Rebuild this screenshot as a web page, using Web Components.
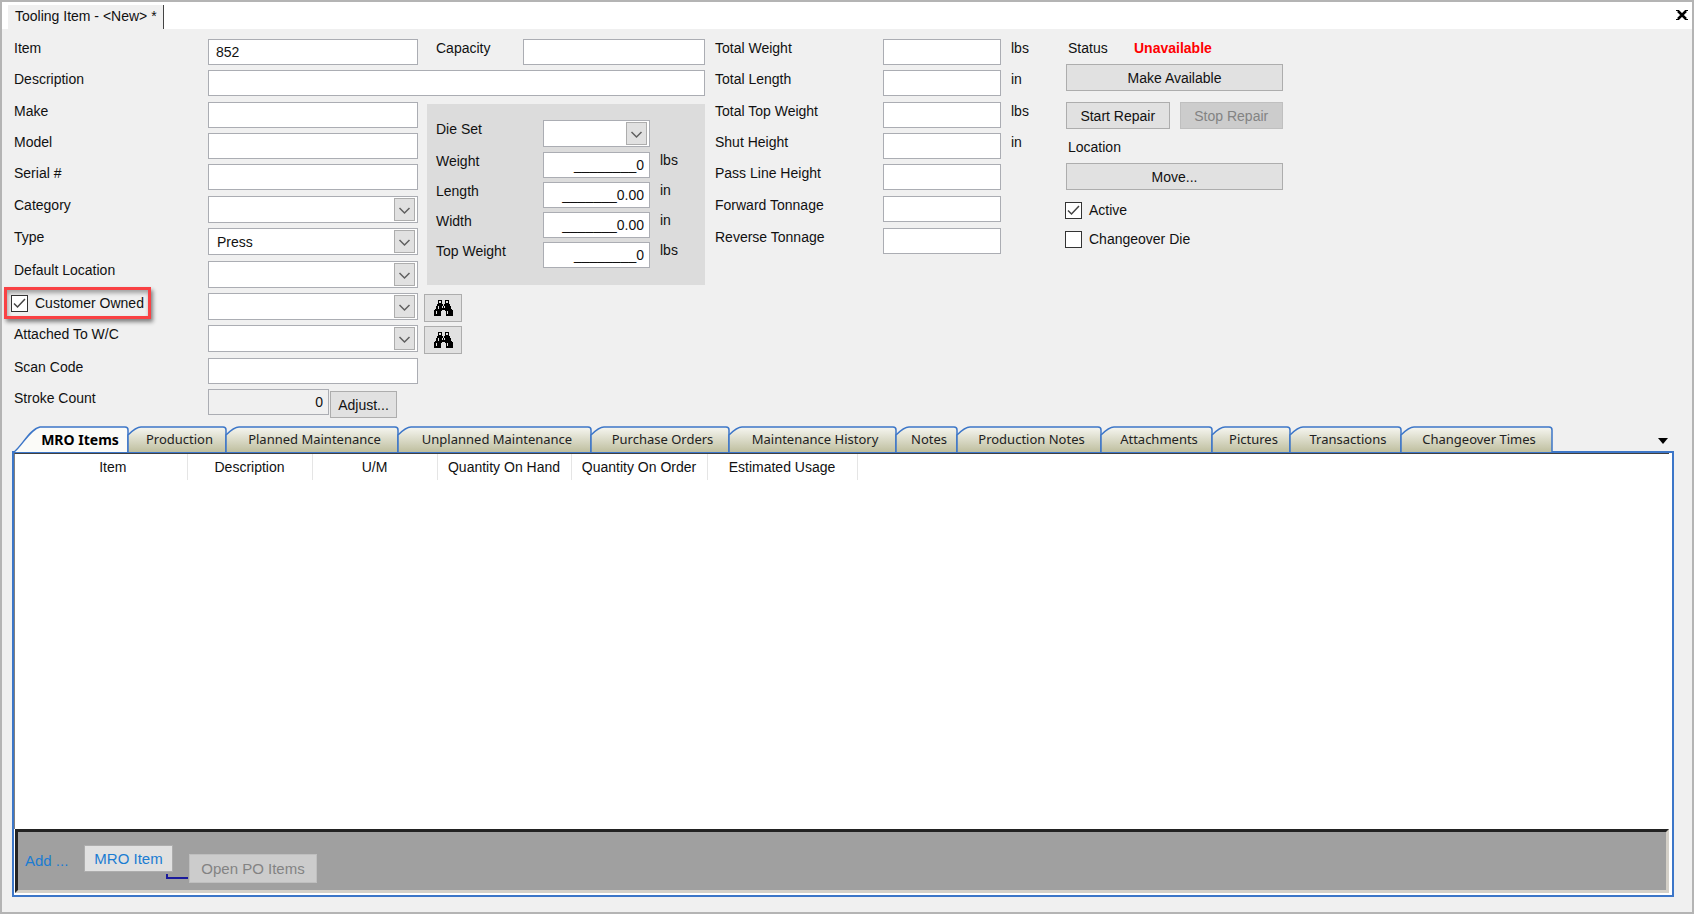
<!DOCTYPE html>
<html lang="en">
<head>
<meta charset="utf-8">
<title>Tooling Item</title>
<style>
  html, body { margin: 0; height: 100%; }
  body {
    font: 14px/18px "Liberation Sans", Arial, sans-serif;
    color: #111;
    background: #f0f0f0;
    --line: #abadb3;
    --button: #e1e1e1;
    --blue: #3c76c8;
  }
</style>
</head>
<body>
<tooling-window></tooling-window>

<script>
const define = (name, html, setup) => {
  const template = document.createElement('template');
  template.innerHTML = html;
  customElements.define(name, class extends HTMLElement {
    constructor() {
      super();
      this.attachShadow({ mode: 'open' }).append(template.content.cloneNode(true));
    }
    connectedCallback() {
      if (setup && !this.ready) { this.ready = true; setup(this, this.shadowRoot); }
    }
  });
};

/* Caption, one-line text box, optional unit */
define('text-field', `
<style>
  :host { display: flex; align-items: flex-start; min-width: 0; }
  label { flex: none; width: var(--caption, 194px); line-height: 18px; white-space: nowrap; }
  input {
    box-sizing: border-box; flex: 1; min-width: 0; height: 26px; margin: 0; padding: 0 5px 0 7px;
    border: 1px solid var(--line); border-radius: 0; background: #fff; font: inherit; color: inherit; outline: 0;
  }
  input:read-only { background: #f0f0f0; }
  :host([numeric]) input { text-align: right; }
  .unit { flex: none; width: var(--unit, 0px); padding-left: 10px; box-sizing: border-box; line-height: var(--unit-line, 18px); }
  .unit:empty { padding: 0; }
  ::slotted(*) { margin: 2px 0 0 1px; }
</style>
<label for="f"></label><input id="f" type="text"><span class="unit"></span><slot></slot>`,
(el, root) => {
  root.querySelector('label').textContent = el.getAttribute('caption');
  const input = root.querySelector('input');
  input.value = el.getAttribute('value') || '';
  input.readOnly = el.hasAttribute('locked');
  root.querySelector('.unit').textContent = el.getAttribute('unit') || '';
});

/* Caption and drop-down; the caption slot can hold another control instead */
define('combo-field', `
<style>
  :host { display: flex; align-items: flex-start; min-width: 0; }
  .caption { flex: none; width: var(--caption, 194px); line-height: 18px; white-space: nowrap; }
  .box { position: relative; flex: 1; min-width: 0; height: 27px; }
  select {
    box-sizing: border-box; width: 100%; height: 27px; margin: 0; padding: 0 26px 0 8px; appearance: none;
    border: 1px solid var(--line); border-radius: 0; background: #fff; font: inherit; color: inherit;
  }
  svg { position: absolute; right: 3px; top: 2px; pointer-events: none; }
  .unit { flex: none; width: var(--unit, 0px); }
</style>
<div class="caption"><slot><label for="f"></label></slot></div>
<div class="box">
  <select id="f"><option></option></select>
  <svg width="21" height="23" viewBox="0 0 21 23">
    <rect x=".5" y=".5" width="20" height="22" fill="#e1e1e1" stroke="#adadad"/>
    <path d="M5.500 10l5 5 5-5" fill="none" stroke="#606060" stroke-width="1.500"/>
  </svg>
</div><span class="unit"></span>`,
(el, root) => {
  root.querySelector('label').textContent = el.getAttribute('caption');
  root.querySelector('select').setAttribute('aria-label', el.getAttribute('caption'));
  root.querySelector('option').textContent = el.getAttribute('value') || '';
});

define('check-field', `
<style>
  :host { position: relative; display: flex; width: max-content; }
  label { display: flex; align-items: center; gap: 7px; line-height: 18px; white-space: nowrap; }
  input {
    appearance: none; flex: none; box-sizing: border-box; width: 17px; height: 17px; margin: 0;
    border: 1px solid #333; background: #fff;
  }
  .tick { position: relative; display: flex; }
  svg { position: absolute; left: 0; top: 0; pointer-events: none; visibility: hidden; }
  input:checked + svg { visibility: visible; }
  :host([marked])::before {
    content: ""; position: absolute; inset: -7px;
    border: 3px solid #f94144; box-shadow: 2px 3px 4px #0007, inset 1px 3px 4px #0005; pointer-events: none;
  }
</style>
<label><span class="tick"><input type="checkbox"><svg width="17" height="17" viewBox="0 0 17 17">
  <path d="M3 8.500l3.500 3.500 7.500-8" fill="none" stroke="#444" stroke-width="1.500"/></svg></span><slot></slot></label>`,
(el, root) => { root.querySelector('input').checked = el.hasAttribute('checked'); });

define('push-button', `
<style>
  :host { display: block; height: 27px; }
  button {
    box-sizing: border-box; display: flex; align-items: center; justify-content: center;
    width: 100%; height: 100%; margin: 0; padding: 0 8px; border: 1px solid #adadad; border-radius: 0;
    background: var(--button); font: inherit; color: inherit; white-space: nowrap;
  }
  button:disabled { background: #ccc; border-color: #bfbfbf; color: #838383; }
</style>
<button type="button"><slot></slot></button>`,
(el, root) => {
  const button = root.querySelector('button');
  button.disabled = el.hasAttribute('disabled');
  if (el.hasAttribute('hint')) button.setAttribute('aria-label', el.getAttribute('hint'));
});

define('find-icon', `
<style>:host { display: block; } svg { display: block; }</style>
<svg width="19" height="17" viewBox="0 0 19 17">
  <path fill="#000" d="M4 0h4v4h1v2h1V4h1V0h4v4h1v2h1v3h1v1h1v6h-7v-5h-1v-1H8v1H7v5H0v-6h1V9h1V6h1V4h1z"/>
  <path fill="#e1e1e1" d="M5 1h2v2H5zM12 1h2v2h-2zM4 6h1v3H4zM2 11h1v3H2zM8 6h1v2H8zM10 6h1v2h-1zM13 11h1v3h-1z"/>
</svg>`);

/* Document tab and close button above the form */
define('title-strip', `
<style>
  :host { display: flex; justify-content: space-between; align-items: flex-end; height: 27px; padding-left: 6px; background: #fff; }
  .tab { box-sizing: border-box; height: 24px; padding: 0 6px 0 7px; line-height: 22px; background: #f0f0f0; border-right: 1px solid #444; white-space: pre; }
  button { width: 14px; height: 12px; margin: 0 3px 8px 0; padding: 0; border: 0; background: none; }
  svg { display: block; }
</style>
<div class="tab"><slot></slot></div>
<button type="button" aria-label="Close"><svg width="14" height="12" viewBox="0 0 14 12">
  <path d="M3 2l8 8M11 2l-8 8" stroke="#000" stroke-width="2.500"/><path d="M1 1.500h3M10 1.500h3M1 10.500h3M10 10.500h3" stroke="#000"/></svg></button>`);

define('item-form', `
<style>
  :host { display: flex; align-items: flex-start; padding: 10px 0 8px 12px; }
  .main {
    display: grid; width: 691px; grid-template-columns: 404px 1fr;
    grid-template-rows: 31px 32px 31px 31px 32px 32px 33px 32px 32px 33px 31px 29px;
  }
  .main > * { grid-column: 1; }
  .main > .wide { grid-column: 1 / -1; }
  .main > .side { grid-column: 2; }
  .capacity { --caption: 87px; margin-left: 18px; }
  .die {
    --caption: 107px; --unit: 46px; --unit-line: 16px;
    grid-row: 3 / span 6; align-self: start; display: grid; gap: 4px;
    grid-template-rows: 28px; grid-auto-rows: 26px;
    box-sizing: border-box; height: 181px; margin: 2px 0 0 9px; padding: 16px 9px 0; background: #dcdcdc;
  }
  .owner { margin: 1px 0 0 -3px; }
  .find { width: 38px; height: 28px; margin: 1px 0 0 6px; }
  .adjust { width: 67px; }
  .stroke-row { display: flex; width: 383px; }
  .stroke-row text-field { flex: 1; }
  .totals { --caption: 168px; --unit: 46px; display: grid; grid-template-rows: 31px 32px 31px 31px 32px 32px 28px; width: 332px; margin-left: 10px; }
  .state { width: 217px; margin-left: 19px; }
  .line { display: flex; height: 25px; padding-left: 2px; }
  .line span { width: 66px; }
  strong { color: #f00; }
  .pair { display: grid; grid-template-columns: 1fr 1fr; gap: 10px; margin: 11px 0 9px; }
  .checks { display: grid; gap: 11px; margin: 11px 0 0 -1px; }
</style>
<div class="main">
  <text-field caption="Item" value="852"></text-field>
  <text-field class="side capacity" caption="Capacity"></text-field>
  <text-field class="wide" caption="Description"></text-field>
  <text-field caption="Make"></text-field>
  <div class="side die">
    <combo-field caption="Die Set"></combo-field>
    <text-field caption="Weight" value="________0" unit="lbs" numeric></text-field>
    <text-field caption="Length" value="_______0.00" unit="in" numeric></text-field>
    <text-field caption="Width" value="_______0.00" unit="in" numeric></text-field>
    <text-field caption="Top Weight" value="________0" unit="lbs" numeric></text-field>
  </div>
  <text-field caption="Model"></text-field>
  <text-field caption="Serial #"></text-field>
  <combo-field caption="Category"></combo-field>
  <combo-field caption="Type" value="Press"></combo-field>
  <combo-field caption="Default Location"></combo-field>
  <combo-field caption="Customer"><check-field class="owner" checked marked>Customer Owned</check-field></combo-field>
  <push-button class="side find" hint="Find customer"><find-icon></find-icon></push-button>
  <combo-field caption="Attached To W/C"></combo-field>
  <push-button class="side find" hint="Find work center"><find-icon></find-icon></push-button>
  <text-field caption="Scan Code"></text-field>
  <div class="stroke-row">
    <text-field caption="Stroke Count" value="0" numeric locked>
      <push-button class="adjust">Adjust...</push-button>
    </text-field>
  </div>
</div>
<div class="totals">
  <text-field caption="Total Weight" unit="lbs"></text-field>
  <text-field caption="Total Length" unit="in"></text-field>
  <text-field caption="Total Top Weight" unit="lbs"></text-field>
  <text-field caption="Shut Height" unit="in"></text-field>
  <text-field caption="Pass Line Height"></text-field>
  <text-field caption="Forward Tonnage"></text-field>
  <text-field caption="Reverse Tonnage"></text-field>
</div>
<div class="state">
  <div class="line"><span>Status</span><strong>Unavailable</strong></div>
  <push-button>Make Available</push-button>
  <div class="pair"><push-button>Start Repair</push-button><push-button disabled>Stop Repair</push-button></div>
  <div class="line">Location</div>
  <push-button>Move...</push-button>
  <div class="checks">
    <check-field checked>Active</check-field>
    <check-field>Changeover Die</check-field>
  </div>
</div>`);

/* A tab with a slanted left shoulder, drawn to the tab's own width */
define('page-tab', `
<style>
  :host { display: block; flex: none; height: 26px; font: 13px/27px "Noto Sans", "DejaVu Sans Condensed", sans-serif; }
  button {
    position: relative; display: block; width: 100%; height: 26px; margin: 0; padding: 0 0 0 5px;
    border: 0; background: none; font: inherit; color: #222; white-space: nowrap;
  }
  :host([selected]) button { font-weight: bold; font-size: 14px; padding-left: 18px; color: #000; }
  svg { position: absolute; left: 0; top: 0; overflow: visible; }
  span { position: relative; }
</style>
<button type="button" role="tab"><svg height="26"><defs><linearGradient id="g" x2="0" y2="1">
  <stop offset="0" stop-color="#f6f6f1"/><stop offset="1" stop-color="#bfbf9f"/></linearGradient></defs>
  <path stroke="#3c76c8" stroke-width="1.500"/></svg><span><slot></slot></span></button>`,
(el, root) => {
  const w = Number(el.getAttribute('size'));
  const selected = el.hasAttribute('selected');
  el.style.width = w + 'px';
  root.querySelector('svg').setAttribute('width', w);
  root.querySelector('button').setAttribute('aria-selected', selected);
  const path = root.querySelector('path');
  const end = `H${w - 3}Q${w} 1 ${w} 4V26`;
  path.setAttribute('d', selected ? `M0 26C8 20 16 3 26 1${end}` : `M0 26V9C4 5 8 1 13 1${end}`);
  path.setAttribute('fill', selected ? '#fbfbf8' : 'url(#g)');
});

define('items-pane', `
<style>
  :host { display: flex; flex-direction: column; flex: 1; margin: 0 18px 15px 10px; }
  nav { display: flex; height: 25px; padding-left: 2px; }
  .more { width: 20px; height: 20px; margin: 5px 1px 0 auto; padding: 0; border: 0; background: none; }
  .more svg { display: block; margin: auto; }
  .pane { display: flex; flex-direction: column; flex: 1; border: 2px solid var(--blue); background: #fff; }
  .sheet { flex: 1; border-top: 1px solid #404040; border-left: 1px solid #808080; margin-right: 3px; }
  table { border-collapse: collapse; table-layout: fixed; width: 842px; }
  th { height: 26px; box-sizing: border-box; padding: 0; border-right: 1px solid #e5e5e5; font-weight: normal; text-align: center; white-space: nowrap; }
  th.mark { border: 0; }
  .foot {
    display: flex; align-items: flex-start; box-sizing: border-box; height: 64px; margin: 0 3px 2px 1px; padding: 13px 0 0 7px;
    background: #a0a0a0; border: 3px solid #d4d0c8; border-top-color: #222; border-left-color: #222;
    font-size: 15px;
  }
  .add { width: 59px; padding-top: 7px; color: #1b7cd2; }
  .mro { width: 89px; color: #1b7cd2; }
  .link { box-sizing: border-box; width: 22px; height: 5px; margin: 29px -7px 0; border: solid #1a1a9c; border-width: 0 0 2px 2px; }
  .po { width: 128px; height: 29px; margin: 9px 0 0 8px; }
</style>
<nav role="tablist">
  <page-tab size="114" selected>MRO Items</page-tab>
  <page-tab size="98">Production</page-tab>
  <page-tab size="172">Planned Maintenance</page-tab>
  <page-tab size="193">Unplanned Maintenance</page-tab>
  <page-tab size="138">Purchase Orders</page-tab>
  <page-tab size="167">Maintenance History</page-tab>
  <page-tab size="61">Notes</page-tab>
  <page-tab size="144">Production Notes</page-tab>
  <page-tab size="111">Attachments</page-tab>
  <page-tab size="78">Pictures</page-tab>
  <page-tab size="111">Transactions</page-tab>
  <page-tab size="151">Changeover Times</page-tab>
  <button class="more" type="button" aria-label="More tabs"><svg width="10" height="6"><path d="M0 0h10L5 6z"/></svg></button>
</nav>
<div class="pane">
  <div class="sheet">
    <table>
      <colgroup><col style="width:24px"><col style="width:148px"><col style="width:125px"><col style="width:125px"><col style="width:134px"><col style="width:136px"><col style="width:150px"></colgroup>
      <thead><tr><th class="mark"></th><th>Item</th><th>Description</th><th>U/M</th><th>Quantity On Hand</th><th>Quantity On Order</th><th>Estimated Usage</th></tr></thead>
    </table>
  </div>
  <div class="foot">
    <span class="add">Add ...</span>
    <push-button class="mro">MRO Item</push-button>
    <span class="link"></span>
    <push-button class="po" disabled>Open PO Items</push-button>
  </div>
</div>`);

define('tooling-window', `
<style>
  :host {
    display: flex; flex-direction: column; box-sizing: border-box; min-height: 100vh;
    border: 2px solid #b4b4b4; background: #f0f0f0;
  }
</style>
<title-strip>Tooling Item - &lt;New&gt; *</title-strip>
<item-form></item-form>
<items-pane></items-pane>`);
</script>
</body>
</html>
